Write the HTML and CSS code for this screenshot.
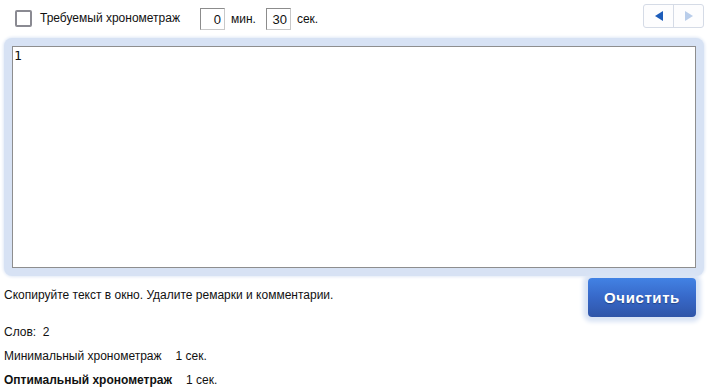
FILE: index.html
```html
<!DOCTYPE html>
<html lang="ru">
<head>
	<meta charset="UTF-8">
	<title>Хронометраж</title>
	<link rel="stylesheet" href="styles.css">
</head>
<body>
<div class="page">
	<div class="top">
		<label class="need">
			<span class="check"></span>
			<span>Требуемый хронометраж</span>
		</label>
		<span class="time"><input type="text" class="num" value="0"> мин.</span>
		<span class="time"><input type="text" class="num" value="30"> сек.</span>
		<div class="nav">
			<a href="javascript:;" class="prev"><span class="arr-l"></span></a>
			<a href="javascript:;" class="next"><span class="arr-r"></span></a>
		</div>
	</div>

	<div class="box">
		<textarea class="text">1</textarea>
	</div>

	<div class="bar">
		<p class="hint">Скопируйте текст в окно. Удалите ремарки и комментарии.</p>
		<a href="javascript:;" class="clear">Очистить</a>
	</div>

	<p class="words">Слов:&nbsp;&nbsp;2</p>
	<p class="line">Минимальный хронометраж<span class="val">1 сек.</span></p>
	<p class="line"><b>Оптимальный хронометраж</b><span class="val">1 сек.</span></p>
</div>
</body>
</html>
```

FILE: styles.css
```css
body,p,textarea,input{margin:0;padding:0}
body{font:12px/14px "Liberation Sans", Arial, sans-serif;color:#111;background:#fff;}
a{text-decoration:none}

.page{
    padding:0 9px 0 4px;
}
.top{
    height:36px;
    display:flex;
    align-items:center;
}
.need{
    display:flex;
    align-items:center;
    margin-left:11px;
}
.check{
    width:13px;
    height:13px;
    border:2px solid #8a8a92;
    border-radius:2px;
    margin-right:8px;
}
.time{
    display:flex;
    align-items:center;
    margin-left:20px;
    padding-top:1px;
}
.time + .time{
    margin-left:10px;
}
.num{
    width:20px;
    height:18px;
    border:1px solid #c8c8c8;
    border-top-color:#8c8c8c;
    border-left-color:#8c8c8c;
    padding:2px 3px 0 0;
    text-align:right;
    font:13px "Liberation Sans", Arial, sans-serif;
    color:#111;
    margin-right:6px;
}
.nav{
    margin-left:auto;
    margin-top:-4px;
    display:flex;
    border:1px solid #d5dbe6;
    border-radius:3px;
    background:#fdfdfe;
}
.nav a{
    width:29px;
    height:22px;
    display:flex;
    align-items:center;
    justify-content:center;
}
.nav .prev{
    border-right:1px solid #d5dbe6;
}
.arr-l{
    width:0;
    height:0;
    border-top:5px solid transparent;
    border-bottom:5px solid transparent;
    border-right:8px solid #1c5cba;
    margin-left:1px;
}
.arr-r{
    width:0;
    height:0;
    border-top:5px solid transparent;
    border-bottom:5px solid transparent;
    border-left:8px solid #b9cdea;
}

.box{
    margin-top:2px;
    padding:8px;
    border-radius:8px;
    background:#d7e2f4;
    box-shadow:0 0 3px 1px #e1e9f6;
}
.text{
    display:block;
    width:680px;
    height:216px;
    border:1px solid #8e8e8e;
    padding:2px 1px;
    resize:none;
    font:13px/14px "DejaVu Sans Mono", monospace;
    color:#111;
    outline:none;
}

.bar{
    display:flex;
    align-items:center;
    justify-content:space-between;
}
.hint{
    margin-top:-4px;
}
.clear{
    margin:2px 8px 0 0;
    width:108px;
    height:39px;
    line-height:39px;
    text-align:center;
    border-radius:4px;
    background:linear-gradient(#4282e4, #3768c8 50%, #2f55a8);
    box-shadow:0 0 4px 5px #dae4f5;
    color:#fff;
    font:bold 15px/39px "Liberation Sans", Arial, sans-serif;
    letter-spacing:0.6px;
    text-shadow:0 1px 1px rgba(0,0,0,.3);
}

.words{
    margin-top:8px;
}
.line{
    margin-top:10px;
}
.val{
    margin-left:14px;
}
```
